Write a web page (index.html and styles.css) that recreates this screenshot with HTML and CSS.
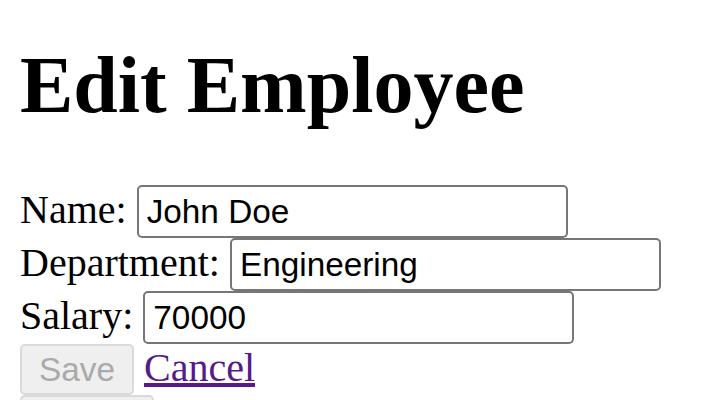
FILE: index.html
```html
<!DOCTYPE html>
<html lang="en">
<head>
    <meta charset="UTF-8">
    <title>Edit Employee</title>
    <link rel="stylesheet" href="styles.css">
</head>
<body>
    <h1>Edit Employee</h1>
    <form class="edit-form">
        <label for="name">Name:</label>
        <input type="text" id="name" name="name" value="John Doe">
        <br>
        <label for="department">Department:</label>
        <input type="text" id="department" name="department" value="Engineering">
        <br>
        <label for="salary">Salary:</label>
        <input type="text" id="salary" name="salary" value="70000">
        <br>
        <button type="submit" disabled>Save</button>
        <a href="#" class="cancel-link">Cancel</a>
        <br>
        <button type="button" disabled>Delete</button>
    </form>
</body>
</html>
```

FILE: styles.css
```css
body {
    font-family: "Liberation Serif", "Times New Roman", serif;
    font-size: 40px;
    margin: 20px;
    color: #000;
    background-color: #fff;
}
h1 {
    font-size: 80px;
    font-weight: bold;
    margin: 20px 0 54px;
}
.edit-form {
    line-height: 1.15;
}
input[type="text"] {
    font-family: "Liberation Sans", Arial, sans-serif;
    font-size: 33.33px;
    width: 431px;
    height: 53px;
    box-sizing: border-box;
    padding: 0 8px;
    border: 2px solid #767676;
    border-radius: 5px;
    color: #000;
    background-color: #fff;
}
button {
    font-family: "Liberation Sans", Arial, sans-serif;
    font-size: 33.33px;
    height: 51px;
    box-sizing: border-box;
    padding: 0 17px;
    border: 2px solid #d9d9d9;
    border-radius: 5px;
    background-color: #efefef;
    color: #aaaaaa;
}
.cancel-link {
    color: #551a8b;
}
```
